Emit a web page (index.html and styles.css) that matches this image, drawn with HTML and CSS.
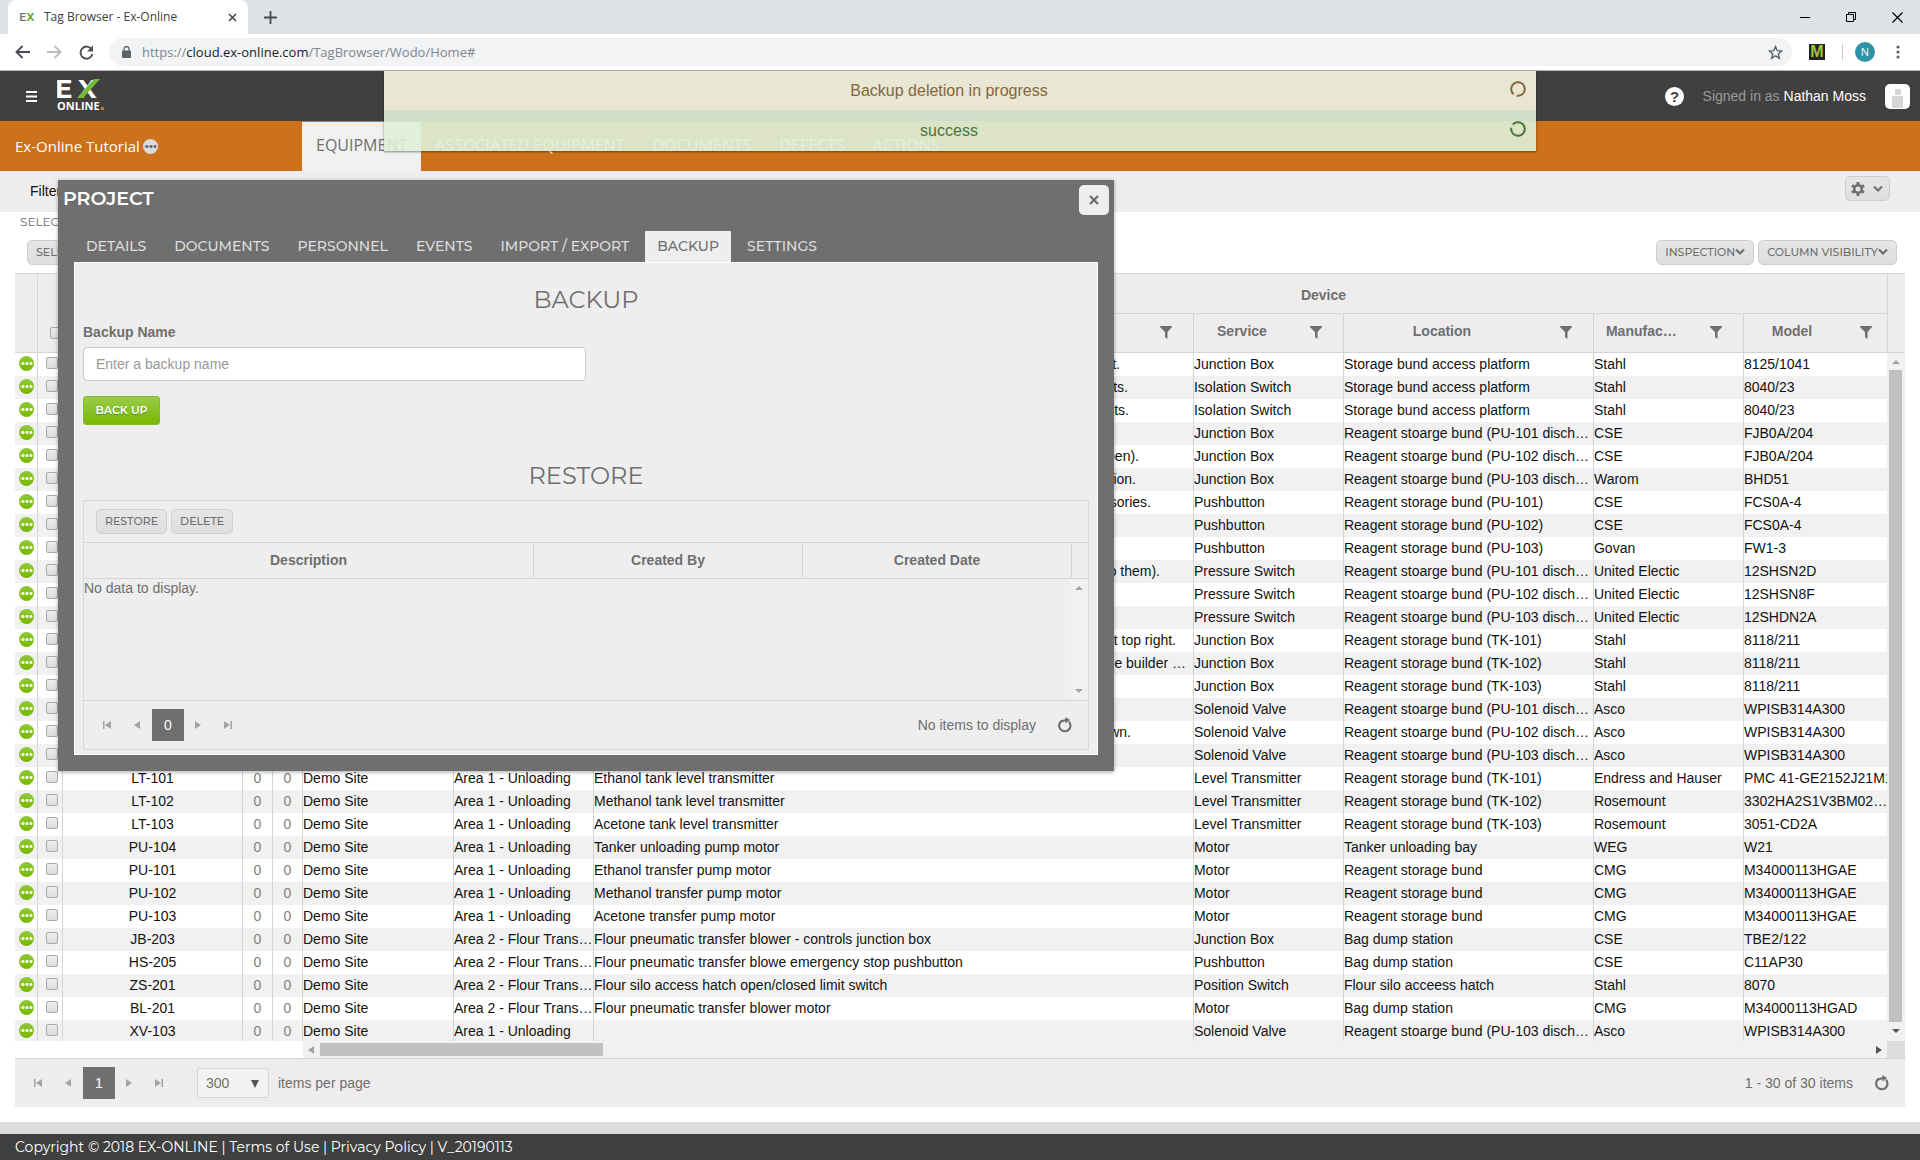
FILE: index.html
```html
<!DOCTYPE html>
<html lang="en">
<head>
<meta charset="utf-8">
<title>Tag Browser - Ex-Online</title>
<link rel="stylesheet" href="styles.css">
</head>
<body>
<svg class="defs" width="0" height="0" aria-hidden="true">
  <symbol id="refresh" viewBox="0 0 16 16"><path d="M5 3.600A5.700 5.700 0 1 0 12 4.700" fill="none" stroke="currentColor" stroke-width="2.200"/><path d="M8.500 0l4.500 3-4.500 3.500V4.200L4.500 5.500 3.500 3.500 8.500 2z" fill="currentColor"/></symbol>
  <symbol id="funnel" viewBox="0 0 12 13"><path d="M0 0h12v1L7.500 6v7L5 11V6L0 1z" fill="currentColor"/></symbol>
  <symbol id="chev" viewBox="0 0 10 8"><path d="M1 1.500l4 4 4-4" fill="none" stroke="currentColor" stroke-width="2.200"/></symbol>
  <symbol id="first" viewBox="0 0 8 8"><path d="M0 0h1.500v8H0zM8 0v8L2 4z" fill="currentColor"/></symbol>
  <symbol id="prev" viewBox="0 0 8 8"><path d="M7 0v8L1 4z" fill="currentColor"/></symbol>
  <symbol id="next" viewBox="0 0 8 8"><path d="M1 0v8l6-4z" fill="currentColor"/></symbol>
  <symbol id="last" viewBox="0 0 8 8"><path d="M0 0v8l6-4zM6.500 0H8v8H6.500z" fill="currentColor"/></symbol>
  <symbol id="up" viewBox="0 0 8 8"><path d="M0 6h8L4 2z" fill="currentColor"/></symbol>
  <symbol id="down" viewBox="0 0 8 8"><path d="M0 2h8L4 6z" fill="currentColor"/></symbol>
</svg>

<div class="tabstrip">
  <div class="btab">
    <span class="favicon"><b>E</b><i>X</i></span>
    <span class="btab-title">Tag Browser - Ex-Online</span>
    <button class="plain" aria-label="Close tab"><svg width="9" height="9" viewBox="0 0 9 9"><path d="M1 1l7 7M8 1L1 8" stroke="#45494d" stroke-width="1.600"/></svg></button>
  </div>
  <button class="plain newtab" aria-label="New tab"><svg width="13" height="13" viewBox="0 0 13 13"><path d="M6.500 0v13M0 6.500h13" stroke="#45494d" stroke-width="1.800"/></svg></button>
  <div class="winbtns">
    <button class="plain" aria-label="Minimize"><svg width="11" height="11" viewBox="0 0 11 11"><path d="M0 5.500h10" stroke="#000"/></svg></button>
    <button class="plain" aria-label="Restore"><svg width="11" height="11" viewBox="0 0 11 11"><path d="M.5 2.500h7v7h-7zM2.500 2.500v-2h7v7h-2" fill="none" stroke="#000"/></svg></button>
    <button class="plain" aria-label="Close"><svg width="11" height="11" viewBox="0 0 11 11"><path d="M.5.5l10 10M10.500.5l-10 10" stroke="#000" stroke-width="1.200"/></svg></button>
  </div>
</div>

<div class="toolbar">
  <button class="plain" aria-label="Back"><svg width="15" height="14" viewBox="0 0 15 14"><path d="M15 7H2M7.500 1L1.500 7l6 6" fill="none" stroke="#4a4e52" stroke-width="1.900"/></svg></button>
  <button class="plain" aria-label="Forward"><svg width="15" height="14" viewBox="0 0 15 14"><path d="M0 7h13M7.500 1l6 6-6 6" fill="none" stroke="#babcbe" stroke-width="1.900"/></svg></button>
  <button class="plain" aria-label="Reload"><svg width="15" height="15" viewBox="0 0 15 15"><path d="M12.600 4.300A6 6 0 1 0 13.400 9" fill="none" stroke="#4a4e52" stroke-width="1.900"/><path d="M14 .5v6H8z" fill="#4a4e52"/></svg></button>
  <div class="omnibox">
    <svg width="9" height="12" viewBox="0 0 9 12"><path d="M2 5V3a2.500 2.500 0 0 1 5 0v2" fill="none" stroke="#5f6368" stroke-width="1.300"/><rect y="4.500" width="9" height="7.500" rx="1" fill="#5f6368"/></svg>
    <span class="url">https://<b>cloud.ex-online.com</b>/TagBrowser/Wodo/Home#</span>
    <svg width="15" height="15" viewBox="0 0 15 15"><path d="M7.500 1.500l1.700 4.200 4.500.3-3.500 2.900 1.200 4.400-3.900-2.400-3.900 2.400 1.200-4.400L1.300 6l4.500-.3z" fill="none" stroke="#5f6368" stroke-width="1.400"/></svg>
  </div>
  <span class="ext">M</span>
  <span class="tsep"></span>
  <span class="avatar">N</span>
  <button class="plain" aria-label="Menu"><svg width="4" height="14" viewBox="0 0 4 14" fill="#5f6368"><circle cx="2" cy="2" r="1.600"/><circle cx="2" cy="7" r="1.600"/><circle cx="2" cy="12" r="1.600"/></svg></button>
</div>

<div class="app">
  <header class="apphead">
    <button class="plain" aria-label="Open menu"><svg width="12" height="11" viewBox="0 0 12 11"><path d="M0 1h11M0 5.500h11M0 10h11" stroke="#fff" stroke-width="2"/></svg></button>
    <svg class="logo" width="50" height="34" viewBox="0 0 50 34" role="img" aria-label="EX Online">
      <text x="-2" y="19" class="logo-e">E</text><text x="21" y="19" class="logo-e">X</text>
      <path d="M20 19L37 0h6L26 19z" fill="#78b833"/>
      <text x="0" y="31" class="logo-o">ONLINE</text><rect x="44" y="28" width="3" height="3" fill="#d8761c"/>
    </svg>
    <svg class="help" width="19" height="19" viewBox="0 0 19 19"><circle cx="9.500" cy="9.500" r="9.500" fill="#fff"/><text x="9.500" y="15" text-anchor="middle" class="qm">?</text></svg>
    <span class="signed">Signed in as <a href="#">Nathan Moss</a></span>
    <svg width="25" height="25" viewBox="0 0 25 25"><rect width="25" height="25" rx="5" fill="#fff"/><path d="M10 5h6v6h-6zM7 12h11v12H7z" fill="#d6d6d6"/></svg>
  </header>

  <nav class="mainnav">
    <div class="project">Ex-Online Tutorial <span class="dots grey"></span></div>
    <a class="on" href="#">EQUIPMENT</a><a href="#">ASSOCIATED EQUIPMENT</a><a href="#">DOCUMENTS</a><a href="#">DEFECTS</a><a href="#">ACTIONS</a>
  </nav>

  <div class="toasts">
    <div class="toast warn">Backup deletion in progress<svg width="16" height="16" viewBox="0 0 16 16"><circle cx="8" cy="8" r="6.800" fill="none" stroke="currentColor" stroke-width="2" stroke-dasharray="39 3.700" transform="rotate(130 8 8)"/></svg></div>
    <div class="toast ok">success<svg width="16" height="16" viewBox="0 0 16 16"><circle cx="8" cy="8" r="6.800" fill="none" stroke="currentColor" stroke-width="2" stroke-dasharray="39 3.700" transform="rotate(220 8 8)"/></svg></div>
  </div>

  <div class="filterbar">
    <span>Filters</span>
    <button class="btn gear" aria-label="Settings"><svg width="14" height="14" viewBox="0 0 14 14"><path d="M7 0v14M1 3.500l12 7M13 3.500l-12 7" stroke="#6f6f6f" stroke-width="3"/><circle cx="7" cy="7" r="3.800" fill="#e4e4e4" stroke="#6f6f6f" stroke-width="2.600"/></svg><svg width="10" height="8"><use href="#chev"/></svg></button>
  </div>

  <main class="content">
    <div class="selinfo">SELECTED: 0</div>
    <div class="actions">
      <button class="btn">SELECT ALL</button>
      <button class="btn push">INSPECTION<svg width="10" height="8"><use href="#chev"/></svg></button>
      <button class="btn">COLUMN VISIBILITY<svg width="10" height="8"><use href="#chev"/></svg></button>
    </div>

    <section class="grid">
      <div class="grid-main">
        <div class="grid-view">
          <table class="tags">
            <colgroup><col class="c1"><col class="c2"><col class="c3"><col class="c4"><col class="c4"><col class="c5"><col class="c6"><col><col class="c8"><col class="c9"><col class="c8"><col class="c11"></colgroup>
            <thead>
              <tr><th rowspan="2"></th><th rowspan="2" class="pick"><input type="checkbox" aria-label="Select all"></th><th rowspan="2"></th><th rowspan="2"></th><th rowspan="2"></th><th rowspan="2"></th><th rowspan="2"></th><th colspan="5" class="device">Device</th></tr>
              <tr>
                <th><div class="hc"><span></span><svg width="12" height="13"><use href="#funnel"/></svg></div></th>
                <th><div class="hc"><span>Service</span><svg width="12" height="13"><use href="#funnel"/></svg></div></th>
                <th><div class="hc"><span>Location</span><svg width="12" height="13"><use href="#funnel"/></svg></div></th>
                <th><div class="hc"><span>Manufacturer</span><svg width="12" height="13"><use href="#funnel"/></svg></div></th>
                <th><div class="hc model"><span>Model</span><svg width="12" height="13"><use href="#funnel"/></svg></div></th>
              </tr>
            </thead>
            <tbody id="rows"></tbody>
          </table>
        </div>
        <div class="vside">
          <div class="vcap"></div>
          <div class="vbar"><svg width="8" height="8" class="dim"><use href="#up"/></svg><div class="vthumb"></div><svg width="8" height="8"><use href="#down"/></svg></div>
        </div>
      </div>
      <div class="hrow"><div class="hbar"><svg width="8" height="8" class="dim"><use href="#prev"/></svg><div class="hthumb"></div><svg width="8" height="8"><use href="#next"/></svg></div><div class="corner"></div></div>
      <div class="pager main-pager">
        <button class="pg" aria-label="First"><svg width="8" height="8"><use href="#first"/></svg></button>
        <button class="pg" aria-label="Previous"><svg width="8" height="8"><use href="#prev"/></svg></button>
        <button class="pg cur">1</button>
        <button class="pg" aria-label="Next"><svg width="8" height="8"><use href="#next"/></svg></button>
        <button class="pg" aria-label="Last"><svg width="8" height="8"><use href="#last"/></svg></button>
        <div class="size"><select id="size"><option>300</option></select><svg width="8" height="8"><path d="M0 0h8L4 8z" fill="#555"/></svg></div>
        <label for="size">items per page</label>
        <span class="count">1 - 30 of 30 items</span>
        <button class="plain rf" aria-label="Refresh"><svg width="16" height="16"><use href="#refresh"/></svg></button>
      </div>
    </section>
  </main>

  <footer class="foot">Copyright © 2018 EX-ONLINE | <a href="#">Terms of Use</a> | <a href="#">Privacy Policy</a> | V_20190113</footer>

  <div class="modal" role="dialog" aria-labelledby="mt">
    <div class="mhead"><h1 id="mt">PROJECT</h1><button class="mclose" aria-label="Close"><svg width="10" height="10" viewBox="0 0 10 10"><path d="M1 1l8 8M9 1L1 9" stroke="#6f6f6f" stroke-width="2.400"/></svg></button></div>
    <nav class="mtabs"><a href="#">DETAILS</a><a href="#">DOCUMENTS</a><a href="#">PERSONNEL</a><a href="#">EVENTS</a><a href="#">IMPORT / EXPORT</a><a href="#" class="on">BACKUP</a><a href="#">SETTINGS</a></nav>
    <div class="mbody">
      <h2>BACKUP</h2>
      <label for="bn">Backup Name</label>
      <input id="bn" type="text" placeholder="Enter a backup name">
      <button class="go">BACK UP</button>
      <h2 class="second">RESTORE</h2>
      <div class="rgrid">
        <div class="rtools"><button class="btn">RESTORE</button><button class="btn">DELETE</button></div>
        <table class="rt">
          <colgroup><col class="r1"><col><col><col class="r4"></colgroup>
          <thead><tr><th>Description</th><th>Created By</th><th>Created Date</th><th></th></tr></thead>
        </table>
        <div class="rbody"><span>No data to display.</span><div class="rbar"><svg width="8" height="8"><use href="#up"/></svg><svg width="8" height="8"><use href="#down"/></svg></div></div>
        <div class="pager">
          <button class="pg" aria-label="First"><svg width="8" height="8"><use href="#first"/></svg></button>
          <button class="pg" aria-label="Previous"><svg width="8" height="8"><use href="#prev"/></svg></button>
          <button class="pg cur">0</button>
          <button class="pg" aria-label="Next"><svg width="8" height="8"><use href="#next"/></svg></button>
          <button class="pg" aria-label="Last"><svg width="8" height="8"><use href="#last"/></svg></button>
          <span class="count">No items to display</span>
          <button class="plain rf" aria-label="Refresh"><svg width="16" height="16"><use href="#refresh"/></svg></button>
        </div>
      </div>
    </div>
  </div>
</div>
<script src="script.js"></script>
</body>
</html>
```

FILE: styles.css
```css
* { box-sizing: border-box; }
body {
  margin: 0; min-height: 100vh; display: flex; flex-direction: column;
  font: 14px/20px "Liberation Sans", Arial, sans-serif; color: #6f6f6f; background: #fff;
}
a { color: inherit; text-decoration: none; }
button { font: inherit; color: inherit; }
svg { display: block; flex: none; }
.defs { position: absolute; }
.plain { border: 0; padding: 0; background: none; }

/* browser frame */
.tabstrip { height: 34px; background: #dee1e6; display: flex; align-items: center; padding-left: 8px; }
.btab { width: 240px; height: 34px; background: #fff; border-radius: 8px 8px 0 0; display: flex; align-items: center; padding: 0 11px; }
.favicon { width: 25px; font: 700 11px/16px Montserrat, Inter, sans-serif; color: #777; }
.favicon b { font-weight: 600; }
.favicon i { font-style: normal; color: #6aa92e; }
.btab-title { flex: 1; font: 12px/16px "Open Sans", sans-serif; color: #3c4043; }
.newtab { margin-left: 16px; }
.winbtns { margin-left: auto; display: flex; gap: 35px; padding-right: 17px; }
.toolbar { height: 37px; border-bottom: 1px solid #b4b3b8; display: flex; align-items: center; padding: 0 20px 0 15px; gap: 17px; }
.omnibox { flex: 1; height: 28px; border-radius: 14px; background: #f1f3f4; display: flex; align-items: center; gap: 11px; padding: 0 9px 0 13px; margin-left: -2px; }
.url { flex: 1; font: 13px/20px "Open Sans", sans-serif; color: #80868b; }
.url b { font-weight: 400; color: #202124; }
.ext { width: 16px; height: 16px; background: #222; color: #9c3; font: 700 16px/16px "Liberation Sans", sans-serif; text-align: center; }
.tsep { width: 1px; height: 16px; background: #c8cacc; }
.avatar { width: 20px; height: 20px; border-radius: 50%; background: #2f93a6; color: #fff; font: 11px/20px "Open Sans", sans-serif; text-align: center; margin: 0 4px 0 -5px; }

/* application */
.app { flex: 1; display: flex; flex-direction: column; position: relative; }
.apphead { height: 50px; background: #404040; display: flex; align-items: center; padding: 0 10px 0 26px; gap: 19px; }
.logo { margin-right: auto; }
.logo-e { font: 700 26px Montserrat, Inter, sans-serif; fill: #fff; }
.logo-o { font: 700 11px "Open Sans", sans-serif; fill: #fff; }
.qm { font: 700 15px "Liberation Sans", sans-serif; fill: #404040; }
.signed { color: #9a9a9a; }
.signed a { color: #fff; }
.mainnav { height: 50px; background: #cd721b; display: flex; align-items: flex-end; font: 16px/20px "Open Sans", sans-serif; color: #fff; }
.project { width: 302px; height: 49px; padding: 0 0 2px 15px; display: flex; align-items: center; gap: 3px; font-size: 15px; }
.mainnav a { height: 49px; padding: 13px 14px; white-space: nowrap; }
.mainnav .on { background: #f1f1f1; color: #6f6f6f; }
.dots { display: block; width: 15px; height: 15px; border-radius: 50%; background: radial-gradient(circle, #fff 1px, transparent 2px) 1px 0 / 4px 15px repeat-x content-box, linear-gradient(#8fc83a, #79b800); padding: 0 1px; }
.dots.grey { background: radial-gradient(circle, #666 1px, transparent 2px) 1px 0 / 4px 15px repeat-x content-box, #dadada; margin-top: 2px; }

.toasts { position: absolute; top: 0; left: 20%; width: 60%; z-index: 3; }
.toast { height: 40px; padding: 10px 42px 10px 20px; text-align: center; font-size: 16px; opacity: .9; position: relative; box-shadow: 0 1px 2px rgba(0,0,0,.5); }
.toast svg { position: absolute; right: 10px; top: 10px; }
.warn { background: #fcf8e3; color: #8a6d3b; }
.ok { background: #dff0d8; color: #3c763d; }

.filterbar { height: 41px; background: #eee; color: #111; display: flex; align-items: center; justify-content: space-between; padding: 0 30px 2px; }
.btn {
  height: 25px; padding: 0 8px 1px; border: 1px solid #cfcfcf; border-radius: 5px; background: linear-gradient(#e6e6e6, #dedede);
  font: 500 11px/16px Montserrat, Inter, sans-serif; color: #6f6f6f; display: flex; align-items: center; white-space: nowrap;
}
.gear { width: 45px; padding: 0 5px; gap: 8px; margin-bottom: 4px; }
.content { padding: 0 15px; }
.selinfo { font: 12px/20px Montserrat, Inter, sans-serif; padding-left: 5px; }
.actions { display: flex; gap: 4px; padding: 8px 8px 8px 12px; }
.push { margin-left: auto; }

.grid-main { display: flex; }
.grid-view { flex: 1; min-width: 0; overflow: hidden; color: #111; border-top: 1px solid #d5d5d5; }
.tags { width: 100%; table-layout: fixed; border-collapse: separate; border-spacing: 0; margin-bottom: -2px; }
.c1 { width: 22px; } .c2 { width: 25px; } .c3 { width: 180px; } .c4 { width: 30px; } .c5 { width: 151px; } .c6 { width: 140px; } .c8 { width: 150px; } .c9 { width: 250px; } .c11 { width: 144px; }
.tags th { background: #eeecec; color: #6f6f6f; font-weight: 700; padding: 0; height: 39px; border-left: 1px solid #d5d5d5; border-bottom: 1px solid #d5d5d5; }
.tags thead tr:first-child th { height: 40px; }
.tags tr > :first-child { border-left: 0; }
.tags thead tr + tr > :first-child { border-left: 1px solid #d5d5d5; }
.tags .device { padding: 2px 0 0 166px; }
.hc { display: flex; align-items: center; padding: 0 21px 5px 12px; }
.hc span { flex: 1; margin-right: 32px; overflow: hidden; text-overflow: ellipsis; white-space: nowrap; }
.hc svg { margin-top: 4px; }
.hc.model { padding-right: 15px; }
.tags td { height: 23px; padding: 0 0 2px; border-left: 1px solid #d5d5d5; overflow: hidden; text-overflow: ellipsis; white-space: nowrap; line-height: 20px; }
.tags td.model { text-overflow: clip; }
.tags tbody tr:nth-child(even) { background: #f1f1f1; }
.tags .tag { text-align: center; }
.tags .num { text-align: center; color: #808080; }
.tags .dots { margin: 0 auto 0 4px; }
.frag { display: inline-block; text-align: right; white-space: nowrap; vertical-align: top; }
input[type=checkbox] { appearance: none; display: block; width: 12px; height: 12px; margin: 0 0 1px 8px; border: 1px solid #aaa; border-radius: 2px; background: linear-gradient(#eee, #dcdcdc); }
.pick input[type=checkbox] { margin: 39px 0 0 12px; }

.vside { width: 18px; display: flex; flex-direction: column; }
.vcap { height: 80px; background: #eeecec; border: 1px solid #d5d5d5; border-right: 0; }
.vbar { flex: 1; background: #f1f1f1; display: flex; flex-direction: column; align-items: center; padding: 5px 1px 6px 0; gap: 4px; color: #555; }
.vthumb { flex: 1; width: 13px; background: #c1c1c1; }
.vbar svg:last-child { margin-top: 1px; }
.dim { color: #a3a3a3; }
.hrow { display: flex; height: 17px; padding-left: 288px; }
.hbar { flex: 1; background: #f1f1f1; display: flex; align-items: center; padding: 0 4px; color: #555; }
.hthumb { width: 283px; height: 13px; background: #c1c1c1; margin: 0 auto 0 5px; }
.corner { width: 18px; background: #dcdcdc; }

.pager { display: flex; align-items: center; height: 49px; padding: 0 15px 0 8px; border-top: 1px solid #d5d5d5; }
.main-pager { background: #eeecec; }
.pg { border: 0; background: none; width: 30px; height: 32px; padding: 0; color: #a3a3a3; display: flex; align-items: center; justify-content: center; }
.pg.cur { width: 32px; background: #6f6f6f; color: #fff; margin-right: -1px; }
.size { position: relative; margin: 0 9px 0 23px; }
.size select { appearance: none; width: 72px; height: 30px; border: 1px solid #d5d5d5; border-radius: 2px; background: #f2f2f2; font: inherit; color: inherit; padding: 0 8px; }
.size svg { position: absolute; right: 10px; top: 12px; }
.count { margin-left: auto; margin-right: 21px; }

.foot { margin-top: auto; height: 38px; border-top: 12px solid #dcdcdc; background: #404040; color: #fff; padding-left: 15px; font: 14px/26px Montserrat, Inter, sans-serif; }

/* project dialog */
.modal { position: absolute; z-index: 2; left: 58px; top: 109px; width: 55%; background: #6f6f6f; padding: 5px 16px 16px; box-shadow: 0 1px 4px rgba(0,0,0,.35); }
.mhead { display: flex; justify-content: space-between; margin: 0 -11px; }
h1 { margin: 0; font: 600 19px/28px Montserrat, Inter, sans-serif; color: #fff; }
.mclose { width: 30px; height: 30px; border: 0; border-radius: 5px; background: #eee; padding: 0; display: grid; place-items: center; }
.mtabs { display: flex; gap: 4px; margin-top: 16px; font: 500 14px/20px Montserrat, Inter, sans-serif; color: #ddd; }
.mtabs a { padding: 5px 12px 6px; }
.mtabs .on { background: #eee; color: #6f6f6f; }
.mbody { background: #eee; border: 1px solid #fff; padding: 23px 8px 4px; }
h2 { margin: 0; text-align: center; font: 400 24px/28px Montserrat, Inter, sans-serif; }
.mbody label { display: block; font-weight: 700; margin: 8px 0 5px; }
.mbody input { display: block; width: 50%; height: 34px; border: 1px solid #ccc; border-radius: 4px; background: #fff; font: inherit; padding: 0 12px; }
.mbody input::placeholder { color: #999; opacity: 1; }
.go { display: block; margin-top: 15px; width: 77px; height: 29px; border: 1px solid #83bb2b; border-radius: 3px; background: linear-gradient(#98cb4a, #79b800); color: #fff; font: 600 11px/16px Montserrat, Inter, sans-serif; padding: 0 0 2px; text-shadow: 0 1px 1px rgba(0,0,0,.3); }
.second { margin-top: 37px; margin-bottom: 10px; }
.rgrid { border: 1px solid #d9d9d9; }
.rtools { display: flex; gap: 4px; padding: 8px 12px; }
.rt { width: 100%; table-layout: fixed; border-spacing: 0; }
.r1 { width: 449px; } .r4 { width: 17px; }
.rt th { height: 37px; padding: 0 0 2px; border: solid #d5d5d5; border-width: 1px 0 1px 1px; }
.rt th:first-child { border-left: 0; }
.rbody { height: 121px; display: flex; justify-content: space-between; line-height: 18px; }
.rbar { width: 17px; background: #f1f1f1; color: #a3a3a3; padding: 5px 4px; display: flex; flex-direction: column; justify-content: space-between; }
```

FILE: script.js
```js
// [tag, area, description, service, location, manufacturer, model, text end offset]
const A1 = 'Area 1 - Unloading', A2 = 'Area 2 - Flour Transfer';
const platform = 'Storage bund access platform';
const pump = n => `Reagent stoarge bund (PU-${n} discharge)`;
const bund = n => `Reagent storage bund (${n})`;
const data = [
  ['', A1, 't.', 'Junction Box', platform, 'Stahl', '8125/1041', 526],
  ['', A1, 'ts.', 'Isolation Switch', platform, 'Stahl', '8040/23', 534],
  ['', A1, 'nts.', 'Isolation Switch', platform, 'Stahl', '8040/23', 535],
  ['', A1, '', 'Junction Box', pump(101), 'CSE', 'FJB0A/204'],
  ['', A1, 'pen).', 'Junction Box', pump(102), 'CSE', 'FJB0A/204', 545],
  ['', A1, 'tion.', 'Junction Box', pump(103), 'Warom', 'BHD51', 542],
  ['', A1, 'ssories.', 'Pushbutton', bund('PU-101'), 'CSE', 'FCS0A-4', 557],
  ['', A1, '', 'Pushbutton', bund('PU-102'), 'CSE', 'FCS0A-4'],
  ['', A1, '', 'Pushbutton', bund('PU-103'), 'Govan', 'FW1-3'],
  ['', A1, 'to them).', 'Pressure Switch', pump(101), 'United Electic', '12SHSN2D', 566],
  ['', A1, '', 'Pressure Switch', pump(102), 'United Electic', '12SHSN8F'],
  ['', A1, '', 'Pressure Switch', pump(103), 'United Electic', '12SHDN2A'],
  ['', A1, 'at top right.', 'Junction Box', bund('TK-101'), 'Stahl', '8118/211', 582],
  ['', A1, 'the builder …', 'Junction Box', bund('TK-102'), 'Stahl', '8118/211', 592],
  ['', A1, '', 'Junction Box', bund('TK-103'), 'Stahl', '8118/211'],
  ['', A1, '', 'Solenoid Valve', pump(101), 'Asco', 'WPISB314A300'],
  ['', A1, 'own.', 'Solenoid Valve', pump(102), 'Asco', 'WPISB314A300', 537],
  ['', A1, '', 'Solenoid Valve', pump(103), 'Asco', 'WPISB314A300'],
  ['LT-101', A1, 'Ethanol tank level transmitter', 'Level Transmitter', bund('TK-101'), 'Endress and Hauser', 'PMC 41-GE2152J21M1'],
  ['LT-102', A1, 'Methanol tank level transmitter', 'Level Transmitter', bund('TK-102'), 'Rosemount', '3302HA2S1V3BM02…'],
  ['LT-103', A1, 'Acetone tank level transmitter', 'Level Transmitter', bund('TK-103'), 'Rosemount', '3051-CD2A'],
  ['PU-104', A1, 'Tanker unloading pump motor', 'Motor', 'Tanker unloading bay', 'WEG', 'W21'],
  ['PU-101', A1, 'Ethanol transfer pump motor', 'Motor', 'Reagent storage bund', 'CMG', 'M34000113HGAE'],
  ['PU-102', A1, 'Methanol transfer pump motor', 'Motor', 'Reagent storage bund', 'CMG', 'M34000113HGAE'],
  ['PU-103', A1, 'Acetone transfer pump motor', 'Motor', 'Reagent storage bund', 'CMG', 'M34000113HGAE'],
  ['JB-203', A2, 'Flour pneumatic transfer blower - controls junction box', 'Junction Box', 'Bag dump station', 'CSE', 'TBE2/122'],
  ['HS-205', A2, 'Flour pneumatic transfer blowe emergency stop pushbutton', 'Pushbutton', 'Bag dump station', 'CSE', 'C11AP30'],
  ['ZS-201', A2, 'Flour silo access hatch open/closed limit switch', 'Position Switch', 'Flour silo acceess hatch', 'Stahl', '8070'],
  ['BL-201', A2, 'Flour pneumatic transfer blower motor', 'Motor', 'Bag dump station', 'CMG', 'M34000113HGAD'],
  ['XV-103', A1, '', 'Solenoid Valve', pump(103), 'Asco', 'WPISB314A300'],
];
document.getElementById('rows').innerHTML = data.map(([tag, area, desc, svc, loc, mfr, model, end]) => `<tr>
  <td><span class="dots"></span></td><td><input type="checkbox" aria-label="Select ${tag}"></td>
  <td class="tag">${tag}</td><td class="num">0</td><td class="num">0</td><td>Demo Site</td><td>${area}</td>
  <td>${end ? `<span class="frag" style="width:${end}px">${desc}</span>` : desc}</td>
  <td>${svc}</td><td>${loc}</td><td>${mfr}</td><td class="model">${model}</td></tr>`).join('');
```
